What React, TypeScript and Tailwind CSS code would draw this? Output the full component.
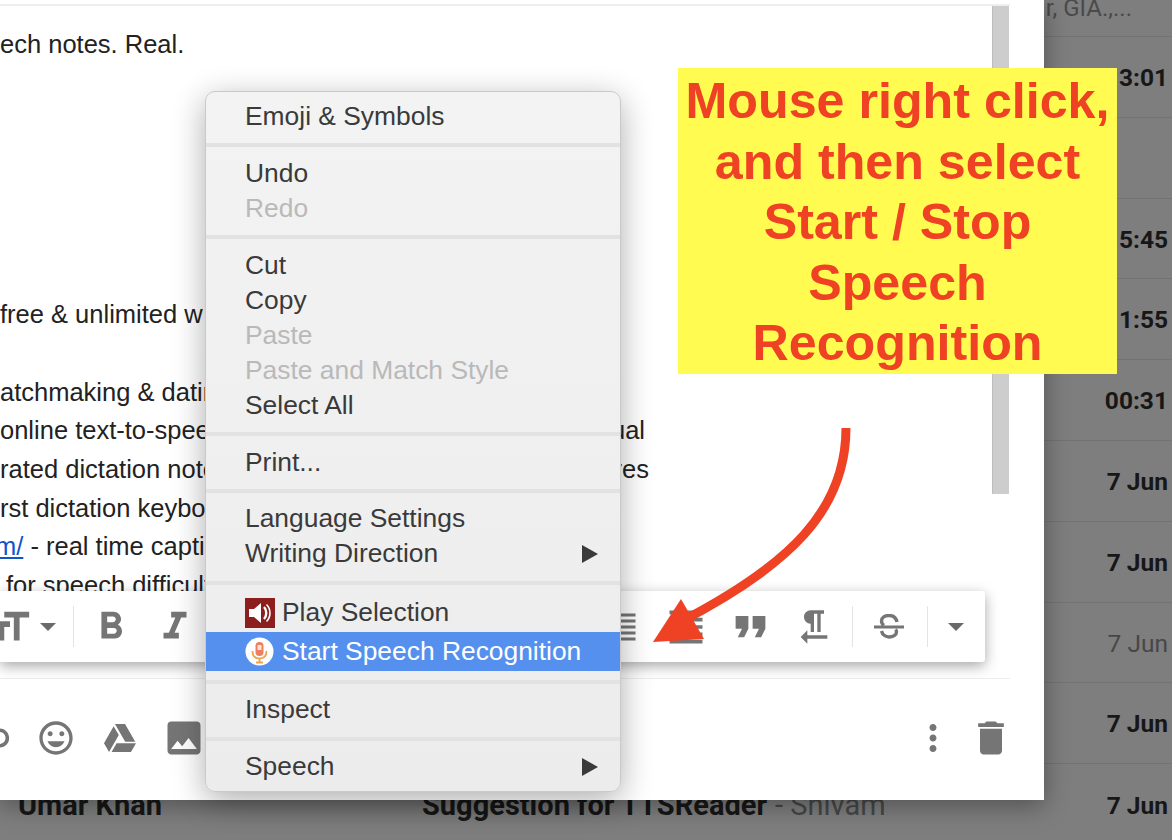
import {
  MdDelete,
  MdFormatAlignJustify,
  MdFormatBold,
  MdFormatIndentIncrease,
  MdFormatItalic,
  MdFormatQuote,
  MdFormatSize,
  MdFormatTextdirectionRToL,
  MdInsertPhoto,
  MdLink,
  MdMoreVert,
  MdOutlineInsertEmoticon,
} from "react-icons/md";
import { FaGoogleDrive } from "react-icons/fa";

const times = ["3:01", "", "5:45", "1:55", "00:31", "7 Jun", "7 Jun", "7 Jun", "7 Jun"];

const bodyLines = [
  { left: "ech notes. Real." },
  {},
  {},
  {},
  {},
  {},
  {},
  { left: "free & unlimited w" },
  {},
  { left: "atchmaking & dating" },
  { left: "online text-to-speech", right: "ual", inset: true },
  { left: "rated dictation notes", right: "res" },
  { left: "rst dictation keyboard" },
  { link: "m/", left: " - real time captions" },
  { left: "for speech difficulties", indent: true },
];

function Caret() {
  return <span className="block h-0 w-0 border-x-[8px] border-t-[8px] border-x-transparent border-t-[#6a6a6a]" />;
}

function ToolbarSep({ className }: { className: string }) {
  return <span className={`h-[41px] w-px shrink-0 bg-[#e4e4e4] ${className}`} />;
}

function ToolIcon({ children }: { children: React.ReactNode }) {
  return <span className="flex w-[64px] shrink-0 items-center justify-center">{children}</span>;
}

function MenuItem({
  label,
  disabled,
  submenu,
}: {
  label: string;
  disabled?: boolean;
  submenu?: boolean;
}) {
  return (
    <div className={`flex h-[35px] items-center justify-between pl-[39px] pr-[22px] ${disabled ? "text-[#b9b9b9]" : "text-[#3a3a3a]"}`}>
      <span>{label}</span>
      {submenu && <span className="h-0 w-0 border-y-[9px] border-l-[16px] border-y-transparent border-l-[#3a3a3a]" />}
    </div>
  );
}

function MenuSep() {
  return <div className="my-[8.900px] h-[4px] bg-[#e2e2e2]" />;
}

function SpeakerIcon() {
  return (
    <svg width="30" height="30" viewBox="0 0 30 30">
      <rect width="30" height="30" fill="#8c1f1e" />
      <path d="M4 11h5l7-6v20l-7-6H4z" fill="#fff" />
      <path d="M19 9c3 3 3 9 0 12" fill="none" stroke="#fff" strokeWidth="2.4" />
      <path d="M21.500 6.500c4.600 4.400 4.600 12.600 0 17" fill="none" stroke="#fff" strokeWidth="1.600" />
    </svg>
  );
}

function MicIcon() {
  return (
    <svg width="29" height="29" viewBox="0 0 29 29">
      <circle cx="14.500" cy="14.500" r="14" fill="#fff" />
      <rect x="10.500" y="5" width="8" height="14" rx="4" fill="#ee7e5f" />
      <rect x="12.500" y="8" width="4" height="5" fill="#fbe3d6" />
      <path d="M7.500 14c0 5 3 7.500 7 7.500s7-2.500 7-7.500" fill="none" stroke="#f0a24f" strokeWidth="1.800" />
      <path d="M14.500 21v4M11 25.500h7" stroke="#f0a24f" strokeWidth="1.800" />
    </svg>
  );
}

function StrikeIcon() {
  return (
    <svg width="32" height="25" viewBox="0 0 32 25" fill="none" stroke="currentColor" strokeWidth="3.400">
      <path d="M24 8C23 3 19 1.500 16 1.500C12 1.500 8.500 3.500 8.500 7C8.500 9 9.500 10.500 11 11.500" />
      <path d="M1 13h30" strokeWidth="3" />
      <path d="M8.500 17C9.500 21 13 23 16 23C20 23 23.500 21 23.500 18C23.500 17 23 16 22.500 15.500" />
    </svg>
  );
}

export default function App() {
  return (
    <div className="relative h-[840px] w-[1172px] overflow-hidden bg-[#7e7e7e] font-['Roboto',sans-serif]">
      {/* inbox behind the dialog */}
      <div className="flex h-[37px] justify-end border-b border-[#737373] pr-[40px] text-[24px] leading-[17px] text-[#4a4a4a]">
        r, GIA.,...
      </div>
      {times.map((time, i) => (
        <div
          key={i}
          className={`flex h-[80.800px] items-center justify-end border-b border-[#737373] pr-1 pt-[3px] text-[24.500px] ${
            i === 7 ? "text-[#474747]" : "font-bold text-[#171717]"
          }`}
        >
          {time}
        </div>
      ))}
      <div className="flex h-[80.800px] items-center pl-[18px] pr-1 pt-[3px] text-[29px] text-[#171717]">
        <span className="w-[404px] font-bold">Umar Khan</span>
        <span className="font-bold">Suggestion for TTSReader</span>
        <span className="ml-[8px] text-[#474747]">- Shivam</span>
        <span className="ml-auto text-[24.500px] font-bold">7 Jun</span>
      </div>

      {/* compose window */}
      <div className="absolute left-0 top-0 h-[800px] w-[1044px] bg-white pt-[4px] shadow-[0_6px_24px_rgba(0,0,0,0.35)]">
        <div className="h-[2px] w-[1010px] bg-[#eeeeee]" />
        <div className="flex h-[672px] w-[1009px]">
          <div className="min-w-0 flex-1 overflow-hidden pt-[18.500px] font-['Liberation_Sans',sans-serif] text-[25.500px] leading-[38.700px] text-[#222222]">
            {bodyLines.map((line, i) => (
              <div
                key={i}
                className={`flex h-[38.700px] justify-between whitespace-nowrap ${line.inset ? "w-[645px]" : "w-[649px]"}`}
              >
                <span className={line.indent ? "pl-[6px]" : line.link ? "-ml-[5px]" : ""}>
                  {line.link && <a className="text-[#1155cc] underline">{line.link}</a>}
                  {line.left}
                </span>
                {line.right && <span>{line.right}</span>}
              </div>
            ))}
          </div>
          <div className="h-[488px] w-[17px] border-l border-[#bdbdbd] bg-[#cdcdcd]" />
        </div>
        <div className="flex h-[122px] w-[1010px] items-center border-t border-[#eeeeee] pb-[4px] text-[#757575]">
          <span className="-ml-[40px] flex w-[64px] justify-center">
            <MdLink size={46} className="-translate-x-[2px]" />
          </span>
          <ToolIcon>
            <MdOutlineInsertEmoticon size={40} />
          </ToolIcon>
          <ToolIcon>
            <FaGoogleDrive size={32} />
          </ToolIcon>
          <ToolIcon>
            <MdInsertPhoto size={44} />
          </ToolIcon>
          <span className="ml-auto flex w-[57px] justify-center">
            <MdMoreVert size={42} className="-translate-x-px" />
          </span>
          <span className="-mr-[9px] flex w-[57px] justify-center">
            <MdDelete size={44} />
          </span>
        </div>

        {/* formatting toolbar */}
        <div className="absolute left-0 top-[591px] flex h-[71px] w-[985px] items-center overflow-hidden rounded-r-[3px] bg-white text-[#757575] shadow-[0_4px_14px_rgba(0,0,0,0.35)]">
          <MdFormatSize size={46} className="-ml-[13px] shrink-0" />
          <span className="ml-[7px] shrink-0">
            <Caret />
          </span>
          <ToolbarSep className="ml-[17px]" />
          <span className="ml-[5px] flex">
            <ToolIcon>
              <MdFormatBold size={46} />
            </ToolIcon>
            <ToolIcon>
              <MdFormatItalic size={46} />
            </ToolIcon>
          </span>
          <span className="ml-[383px] flex">
            <ToolIcon>
              <MdFormatAlignJustify size={36} />
            </ToolIcon>
            <ToolIcon>
              <MdFormatIndentIncrease size={44} />
            </ToolIcon>
            <ToolIcon>
              <MdFormatQuote size={51} />
            </ToolIcon>
            <ToolIcon>
              <MdFormatTextdirectionRToL size={40} />
            </ToolIcon>
          </span>
          <ToolbarSep className="ml-[6px]" />
          <span className="ml-[4px] flex">
            <ToolIcon>
              <StrikeIcon />
            </ToolIcon>
          </span>
          <ToolbarSep className="ml-[6px]" />
          <span className="ml-[20px] shrink-0">
            <Caret />
          </span>
        </div>
      </div>

      {/* right click menu */}
      <div className="absolute left-[205px] top-[91px] w-[416px] rounded-[10px] border border-[#c9c9c9] bg-gradient-to-b from-[#f3f3f3] to-[#ececec] pb-[7px] pt-[7.500px] font-['Liberation_Sans',sans-serif] text-[26.400px] shadow-[0_8px_32px_rgba(0,0,0,0.32)]">
        <MenuItem label="Emoji & Symbols" />
        <MenuSep />
        <MenuItem label="Undo" />
        <MenuItem label="Redo" disabled />
        <MenuSep />
        <MenuItem label="Cut" />
        <MenuItem label="Copy" />
        <MenuItem label="Paste" disabled />
        <MenuItem label="Paste and Match Style" disabled />
        <MenuItem label="Select All" />
        <MenuSep />
        <MenuItem label="Print..." />
        <MenuSep />
        <MenuItem label="Language Settings" />
        <MenuItem label="Writing Direction" submenu />
        <MenuSep />
        <div className="flex h-[39px] items-center gap-[7px] pl-[39px] text-[#3a3a3a]">
          <SpeakerIcon />
          <span>Play Selection</span>
        </div>
        <div className="flex h-[38.500px] items-center gap-[8px] bg-[#5590ee] pl-[39px] text-white">
          <MicIcon />
          <span>Start Speech Recognition</span>
        </div>
        <MenuSep />
        <MenuItem label="Inspect" />
        <MenuSep />
        <MenuItem label="Speech" submenu />
      </div>

      {/* annotation */}
      <div className="absolute left-[678px] top-[68px] h-[306px] w-[439px] bg-[#fffb50] pt-[3px] text-center font-['Liberation_Sans',sans-serif] text-[50.200px] font-bold leading-[60.500px] text-[#ef4123]">
        <div>Mouse right click,</div>
        <div>and then select</div>
        <div>Start / Stop</div>
        <div>Speech</div>
        <div>Recognition</div>
      </div>

      <svg className="absolute left-0 top-0" width="1172" height="840" viewBox="0 0 1172 840">
        <path d="M846 428C846 510 790 565 680 622" fill="none" stroke="#ef4123" strokeWidth="9" />
        <path d="M653 642L681 599L704 639Z" fill="#ef4123" />
      </svg>
    </div>
  );
}
